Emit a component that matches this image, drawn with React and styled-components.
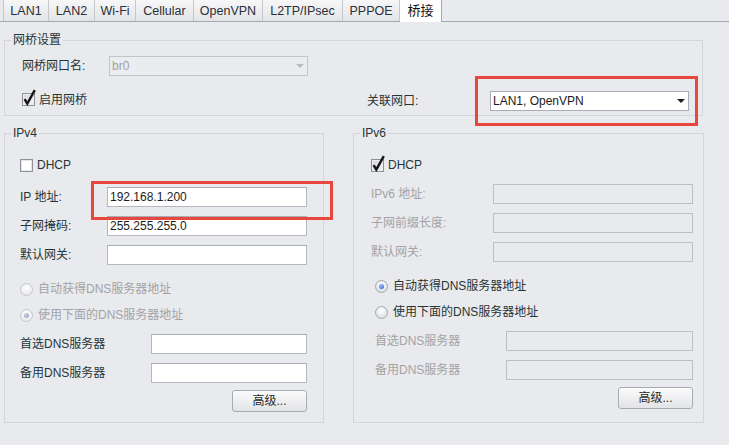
import styled, { createGlobalStyle, css } from 'styled-components'

const GlobalStyle = createGlobalStyle`
  body {
    margin: 0;
    background: #e9eaee;
  }
  * {
    box-sizing: border-box;
  }
`

const TEXT = '#263535'
const MUTED = '#a3a3a3'

const tabs = [
  { name: 'LAN1', w: 46 },
  { name: 'LAN2', w: 46 },
  { name: 'Wi-Fi', w: 41 },
  { name: 'Cellular', w: 58 },
  { name: 'OpenVPN', w: 69 },
  { name: 'L2TP/IPsec', w: 80 },
  { name: 'PPPOE', w: 57 },
  { name: '桥接', w: 42, active: true },
]

const Check = ({ checked, disabled, children }) => (
  <CheckLabel $disabled={disabled}>
    <CheckBox $checked={checked}>
      {checked && (
        <svg width="13" height="13" viewBox="0 0 13 13" overflow="visible">
          <path d="M2.6 6.2 L5.3 10.6 L12.8 -2.8" fill="none" stroke="#151515" strokeWidth="2.4" />
        </svg>
      )}
    </CheckBox>
    {children}
  </CheckLabel>
)

const Radio = ({ checked, disabled, children }) => (
  <CheckLabel $disabled={disabled} $gap={5}>
    <RadioDot $checked={checked} $disabled={disabled} />
    {children}
  </CheckLabel>
)

const Select = ({ value, disabled }) => (
  <SelectBox $disabled={disabled}>
    <span>{value}</span>
    <Caret $disabled={disabled} />
  </SelectBox>
)

const Field = ({ label, value = '', labelWidth, disabled, indent }) => (
  <Line $indent={indent}>
    <FieldLabel $w={labelWidth} $disabled={disabled}>{label}</FieldLabel>
    <TextBox readOnly value={value} disabled={disabled} />
  </Line>
)

const App = () => {
  return (<>
    <GlobalStyle />
    <Page>
      <TabBar>
        {tabs.map(t => (
          <Tab key={t.name} $w={t.w} $active={t.active}>{t.name}</Tab>
        ))}
      </TabBar>

      <Group $w={699} $ml={4} $mt={10}>
        <Legend>网桥设置</Legend>
        <BridgeGrid>
          <FieldLabel>网桥网口名:</FieldLabel>
          <Select value="br0" disabled />
          <BridgeCheck>
            <Check checked>启用网桥</Check>
          </BridgeCheck>
          <LinkLabel>关联网口:</LinkLabel>
          <Marked $t={15} $l={15} $r={9} $b={15}>
            <Select value="LAN1, OpenVPN" />
          </Marked>
        </BridgeGrid>
      </Group>

      <Columns>
        <Group $w={320}>
          <Legend>IPv4</Legend>
          <Section $pl={15} $pr={16}>
            <Line $mt={14}><Check>DHCP</Check></Line>
            <Line $mt={12}>
              <FieldLabel $w={87}>IP 地址:</FieldLabel>
              <Marked $t={6} $l={16} $r={26} $b={13}>
                <TextBox readOnly value="192.168.1.200" />
              </Marked>
            </Line>
            <Field label="子网掩码:" value="255.255.255.0" labelWidth={87} />
            <Field label="默认网关:" labelWidth={87} />
            <Line $mt={14}><Radio disabled>自动获得DNS服务器地址</Radio></Line>
            <Line $mt={6}><Radio checked disabled>使用下面的DNS服务器地址</Radio></Line>
            <Field label="首选DNS服务器" labelWidth={131} />
            <Field label="备用DNS服务器" labelWidth={131} />
            <Line $mt={7} $h={22}><Button>高级...</Button></Line>
          </Section>
        </Group>

        <Group $w={351}>
          <Legend>IPv6</Legend>
          <Section $pl={17} $pr={10}>
            <Line $mt={14}><Check checked>DHCP</Check></Line>
            <Field label="IPv6 地址:" labelWidth={122} disabled />
            <Field label="子网前缀长度:" labelWidth={122} disabled />
            <Field label="默认网关:" labelWidth={122} disabled />
            <Line $mt={14} $indent={4}><Radio checked>自动获得DNS服务器地址</Radio></Line>
            <Line $mt={6} $indent={4}><Radio>使用下面的DNS服务器地址</Radio></Line>
            <Field label="首选DNS服务器" labelWidth={131} indent={4} disabled />
            <Field label="备用DNS服务器" labelWidth={131} indent={4} disabled />
            <Line $mt={7} $h={22}><Button>高级...</Button></Line>
          </Section>
        </Group>
      </Columns>
    </Page>
  </>)
}

const Page = styled.div`
  width: 729px;
  height: 445px;
  overflow: hidden;
  background: #e9eaee;
  font-family: "Liberation Sans", "Noto Sans CJK SC", sans-serif;
  font-size: 12px;
  line-height: 16px;
  color: ${TEXT};
`

const TabBar = styled.div`
  display: flex;
  height: 22px;
  padding-left: 3px;
  border-bottom: 1px solid #a3a7af;
`

const Tab = styled.div`
  flex: none;
  width: ${p => p.$w}px;
  height: 21px;
  display: flex;
  align-items: center;
  justify-content: center;
  border-right: 1px solid #c6c8cd;
  background: linear-gradient(#f7f7f8, #e3e4e7);
  color: #2a2f38;
  font-size: 12.5px;

  &:first-child {
    border-left: 1px solid #c6c8cd;
  }

  ${p => p.$active && css`
    height: 22px;
    background: #fff;
    border-right-color: #a3a7af;
    color: #111;
    font-size: 13px;
  `}
`

const Group = styled.fieldset`
  margin: ${p => p.$mt || 0}px 0 0 ${p => p.$ml || 0}px;
  padding: 0;
  width: ${p => p.$w}px;
  min-width: 0;
  border: 1px solid #d3d5da;
`

const Legend = styled.legend`
  margin-left: 6px;
  padding: 0 2px;
  line-height: 16px;
  color: ${TEXT};
`

const BridgeGrid = styled.div`
  display: grid;
  grid-template-columns: 87px 199px 59px 123px 199px;
  grid-template-rows: 20px 20px;
  row-gap: 15px;
  align-items: center;
  padding: 8px 0 4px 17px;
`

const BridgeCheck = styled.div`
  grid-column: 1 / span 3;
`

const LinkLabel = styled.span`
  grid-column: 4;
`

const Columns = styled.div`
  display: flex;
  gap: 29px;
  margin: 9px 0 0 4px;
`

const Section = styled.div`
  display: flex;
  flex-direction: column;
  padding: 0 ${p => p.$pr}px 10px ${p => p.$pl}px;
`

const Line = styled.div`
  display: flex;
  align-items: center;
  justify-content: ${p => p.$h ? 'flex-end' : 'flex-start'};
  height: ${p => p.$h || 20}px;
  margin-top: ${p => p.$mt ?? 9}px;
  padding-left: ${p => p.$indent || 0}px;
`

const FieldLabel = styled.span`
  flex: none;
  width: ${p => p.$w ? `${p.$w}px` : 'auto'};
  color: ${p => p.$disabled ? MUTED : TEXT};
  white-space: nowrap;
`

const TextBox = styled.input`
  flex: 1;
  width: 100%;
  min-width: 0;
  height: 20px;
  margin: 0;
  padding: 0 0 0 2px;
  border: 1px solid #b5b8bf;
  border-top-color: #a9acb4;
  background: #fff;
  font: inherit;
  color: #1c1c1c;
  outline: none;

  &:disabled {
    background: #e9eaee;
    border-color: #bdbfc4;
  }
`

const Marked = styled.div`
  position: relative;
  flex: 1;
  display: flex;
  height: 20px;

  &::after {
    content: '';
    position: absolute;
    top: -${p => p.$t}px;
    left: -${p => p.$l}px;
    right: -${p => p.$r}px;
    bottom: -${p => p.$b}px;
    border: 3px solid #e8473e;
    pointer-events: none;
  }
`

const SelectBox = styled.div`
  flex: 1;
  height: 20px;
  display: flex;
  align-items: center;
  justify-content: space-between;
  padding: 0 3px 0 2px;
  border: 1px solid ${p => p.$disabled ? '#c3c5ca' : '#a9acb3'};
  background: ${p => p.$disabled ? '#ebecef' : '#fff'};
  color: ${p => p.$disabled ? '#a2a2a2' : '#1c1c1c'};
`

const Caret = styled.span`
  width: 0;
  height: 0;
  border-left: 4px solid transparent;
  border-right: 4px solid transparent;
  border-top: 4px solid ${p => p.$disabled ? '#bcbcbc' : '#1f1f2a'};
`

const CheckLabel = styled.label`
  display: inline-flex;
  align-items: center;
  gap: ${p => p.$gap || 4}px;
  color: ${p => p.$disabled ? MUTED : TEXT};
  white-space: nowrap;
`

const CheckBox = styled.span`
  position: relative;
  flex: none;
  width: 13px;
  height: 13px;
  border: 1px solid #8e9199;
  background: ${p => p.$checked
    ? 'linear-gradient(135deg, #d6d8dc, #f4f4f5)'
    : '#fff'};
  box-shadow: inset 0 0 0 1px ${p => p.$checked ? '#eceef0' : '#e4e5e8'};

  svg {
    position: absolute;
    left: -1px;
    top: -1px;
  }
`

const RadioDot = styled.span`
  position: relative;
  flex: none;
  width: 13px;
  height: 13px;
  border-radius: 50%;
  border: 1px solid ${p => p.$disabled ? '#c6c7cb' : '#a3a6ad'};
  background: radial-gradient(circle at 50% 35%, #ffffff, ${p => p.$disabled ? '#e2e3e6' : '#d3d5d9'});

  ${p => p.$checked && css`
    &::after {
      content: '';
      position: absolute;
      left: 3px;
      top: 3px;
      width: 5px;
      height: 5px;
      border-radius: 50%;
      background: ${p.$disabled
        ? 'radial-gradient(circle at 40% 35%, #c8d2e6, #8d9bbb)'
        : 'radial-gradient(circle at 40% 35%, #9fc0ff, #2a56c6)'};
    }
  `}
`

const Button = styled.button`
  width: 75px;
  height: 22px;
  padding: 0;
  border: 1px solid #a7abb3;
  border-radius: 3px;
  background: linear-gradient(#fbfbfc, #e2e3e6);
  font: inherit;
  color: #1f2a2a;
`

export default App
